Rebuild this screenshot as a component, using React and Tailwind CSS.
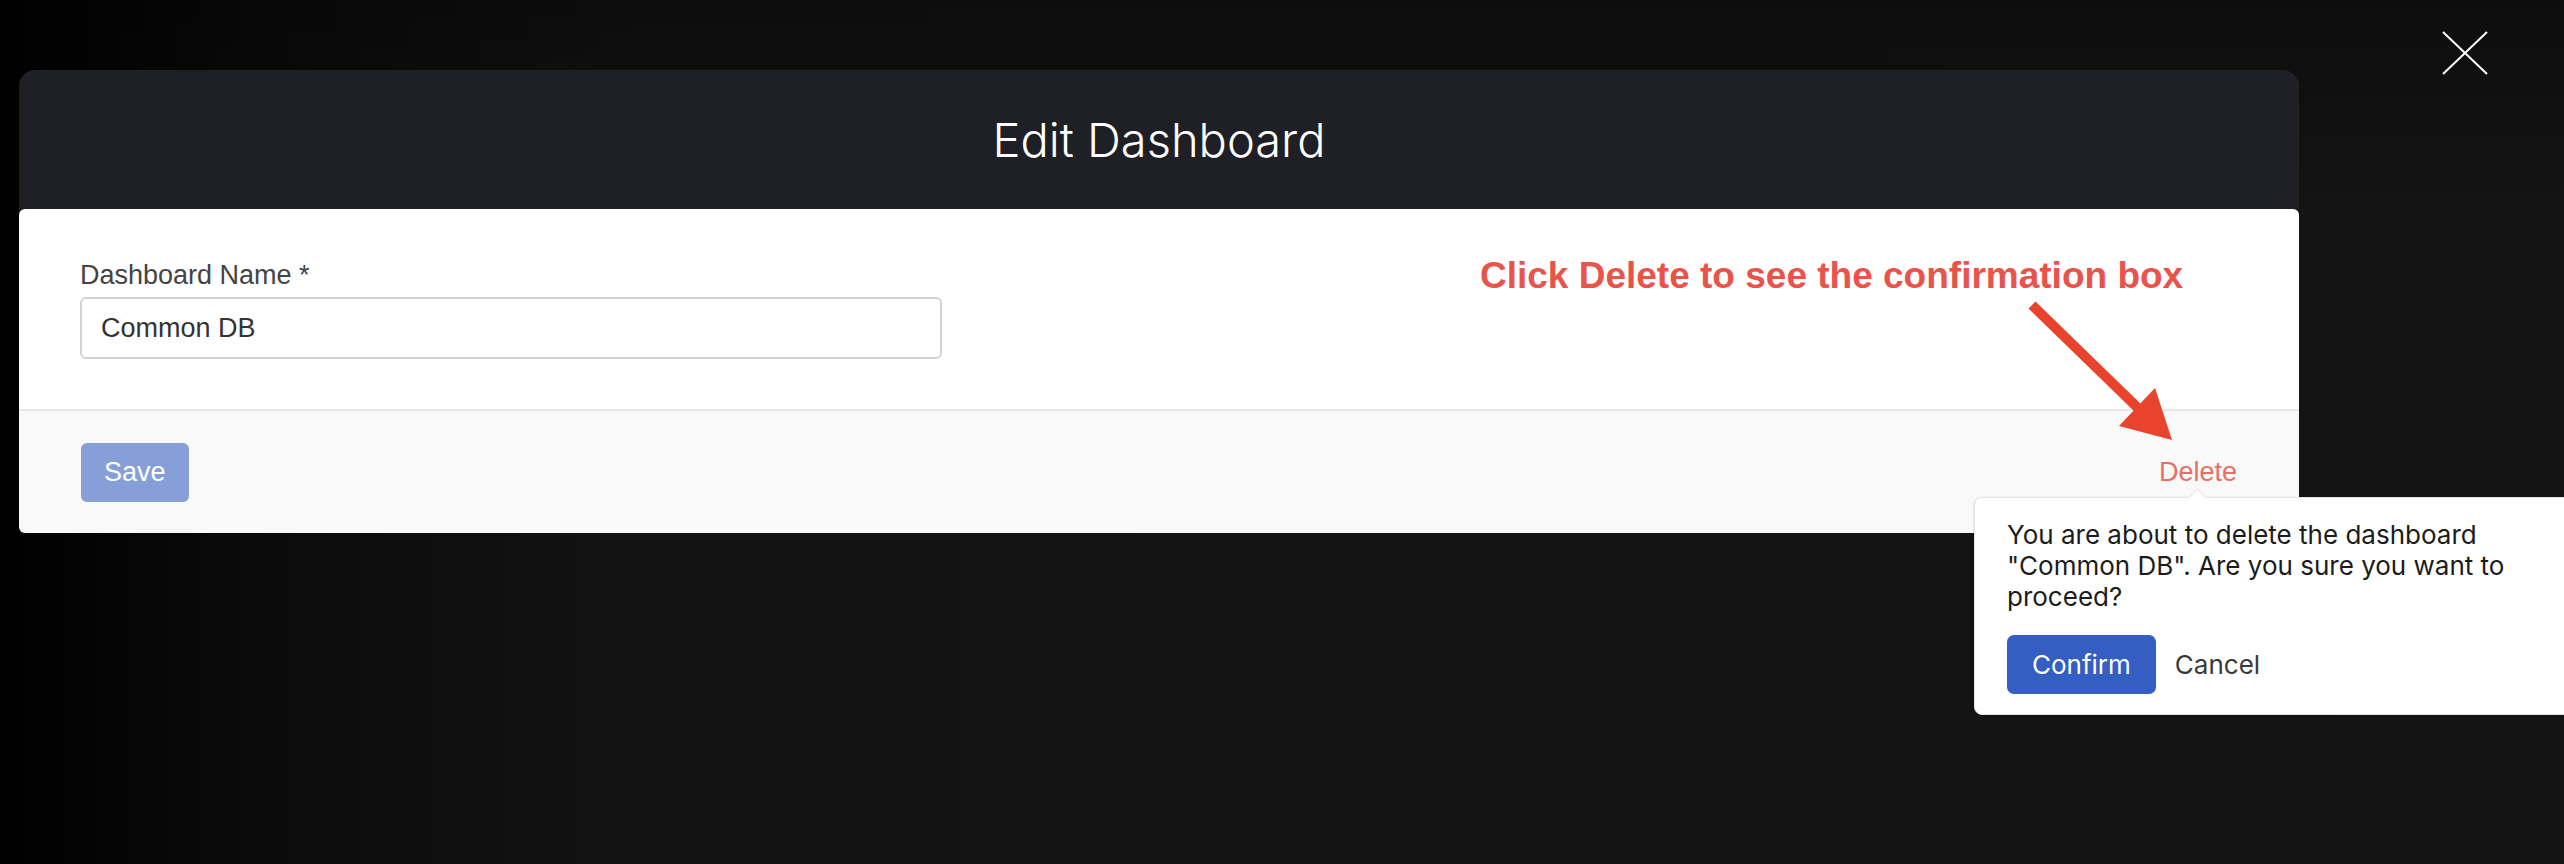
import React from 'react';

const CloseIcon = () => (
  <svg width="46" height="44" viewBox="0 0 46 44" className="absolute left-[2442px] top-[31px]">
    <line x1="1" y1="1" x2="45" y2="43" stroke="#ffffff" strokeWidth="2" />
    <line x1="45" y1="1" x2="1" y2="43" stroke="#ffffff" strokeWidth="2" />
  </svg>
);

const Arrow = () => (
  // hint arrow pointing at the Delete link
  <svg width="170" height="160" viewBox="2020 295 170 160" className="absolute left-[2020px] top-[295px]">
    <line x1="2032" y1="305" x2="2140" y2="410" stroke="#e8432c" strokeWidth="10" />
    <polygon points="2172,440 2119,426 2155,388" fill="#e8432c" />
  </svg>
);

const ConfirmBox = () => {
  return (
    <div className="absolute left-[1974px] top-[497px] w-[620px] h-[218px] bg-white border border-[#e4e4e4] rounded-[8px] shadow-[0_1px_3px_rgba(0,0,0,0.15)] px-[32px] pt-[21px] font-['Inter',sans-serif]">
      <div className="absolute left-[216px] top-[-7px] w-[13px] h-[13px] rotate-45 bg-white border-t border-l border-[#e4e4e4]" />
      <p className="text-[26px] leading-[31px] text-[#1c1c1c] w-[554px]">
        You are about to delete the dashboard "Common DB". Are you sure you want to proceed?
      </p>
      <div className="flex items-center gap-[19px] mt-[23px]">
        <button className="h-[59px] px-[25px] rounded-[7px] bg-[#345ec2] text-white text-[26px]">
          Confirm
        </button>
        <button className="text-[26px] text-[#3a3a3a]">Cancel</button>
      </div>
    </div>
  );
};

export default function App() {
  return (
    <div className="relative w-[2564px] h-[864px] overflow-hidden bg-[linear-gradient(180deg,rgba(0,0,0,0.35)_0%,rgba(0,0,0,0)_25%),linear-gradient(90deg,#000000_0%,#0b0b0b_10%,#131313_25%,#141414_100%)]">
      <div className="pt-[70px] pl-[19px]">
        <div className="w-[2280px] rounded-t-[16px] rounded-b-[6px] bg-[#1f2025]">
          <div className="h-[139px] flex items-center justify-center">
            <h1 className="text-[47px] leading-none font-light text-white font-['Inter',sans-serif]">
              Edit Dashboard
            </h1>
          </div>
          <div className="bg-white rounded-t-[6px] px-[61px] pt-[51px] pb-[50px] font-['Liberation_Sans',Arial,sans-serif]">
            <label className="block text-[27px] leading-[30px] text-[#444444] mb-[7px]">
              Dashboard Name *
            </label>
            <input
              type="text"
              defaultValue="Common DB"
              className="block w-[862px] h-[62px] border-2 border-[#d3d3d3] rounded-[6px] pl-[19px] text-[27px] text-[#333333] outline-none"
            />
          </div>
          <div className="h-[124px] bg-[#f9f9f9] border-t-2 border-[#e8e8e8] rounded-b-[6px] px-[62px] flex items-center justify-between font-['Liberation_Sans',Arial,sans-serif]">
            <button className="h-[59px] px-[23px] rounded-[6px] bg-[#869fd9] text-white text-[27px]">
              Save
            </button>
            <button className="text-[27px] text-[#e77063]">Delete</button>
          </div>
        </div>
      </div>

      <div className="absolute left-[1480px] top-[257px] text-[37px] leading-none font-bold text-[#e9544a] font-['Liberation_Sans',Arial,sans-serif] whitespace-nowrap">
        Click Delete to see the confirmation box
      </div>
      <Arrow />
      <ConfirmBox />
      <CloseIcon />
    </div>
  );
}
